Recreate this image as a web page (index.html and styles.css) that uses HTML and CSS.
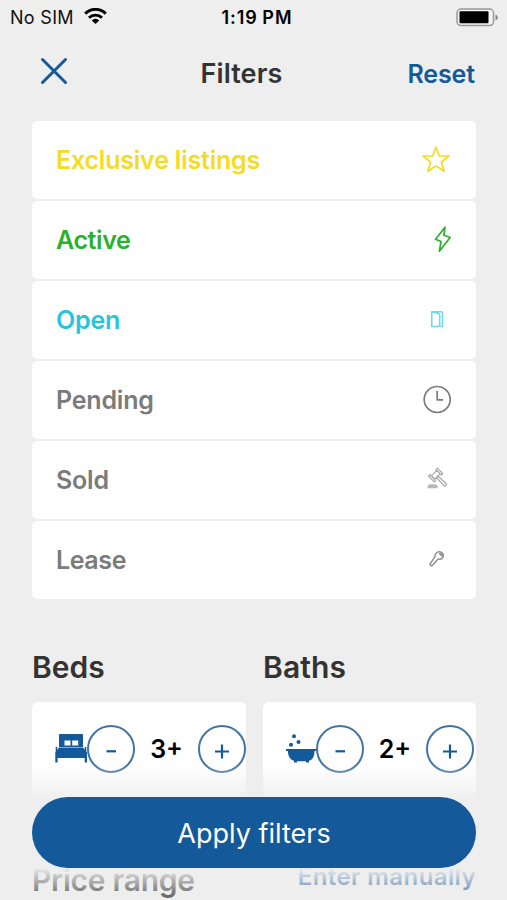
FILE: index.html
```html
<!DOCTYPE html>
<html lang="en">
<head>
<meta charset="utf-8">
<title>Filters</title>
<link rel="stylesheet" href="styles.css">
</head>
<body>
<div class="screen">
  <div class="status">
    <div class="carrier"><span>No SIM</span>
      <svg width="23" height="17" viewBox="0 0 23 17"><g fill="none" stroke="#000" stroke-width="2.9"><path d="M1.200 5.600a14.600 14.600 0 0 1 20.600 0"/><path d="M5 9.800a9.300 9.300 0 0 1 13 0"/></g><path d="M11.500 16l-3.700-3.600a5.200 5.200 0 0 1 7.400 0z"/></svg>
    </div>
    <span class="time">1:19 PM</span>
    <svg class="battery" width="43" height="19" viewBox="0 0 43 19"><rect x="1" y="1" width="36.500" height="16.600" rx="4" fill="#f4f4f4" stroke="#999" stroke-width="1.500"/><rect x="3.500" y="3.300" width="29" height="12" rx="1" fill="#000"/><path d="M39.500 6.500q2.500 1 2.500 3t-2.500 3z" fill="#888"/></svg>
  </div>
  <header class="header">
    <svg class="close" width="28" height="28" viewBox="0 0 28 28"><path d="M2.500 2.500l23 23M25.500 2.500l-23 23" stroke="#14599a" stroke-width="3" stroke-linecap="round"/></svg>
    <h1>Filters</h1>
    <span class="reset">Reset</span>
  </header>
  <main>
    <ul class="list">
      <li class="yellow"><span class="t-exclusive">Exclusive listings</span>
        <svg width="30" height="30" viewBox="0 0 30 30"><path d="M14 2l3.400 9h9.600l-7.600 6 2.700 9.300-8.100-5.400-8.100 5.400 2.700-9.300-7.600-6h9.600z"/></svg></li>
      <li class="green"><span class="t-active">Active</span>
        <svg width="30" height="30" viewBox="0 0 30 30"><path d="M23 2.200l-9.500 12 5.500 2.300-1.600 9.700 10.700-13.700-6.300-2.200z"/></svg></li>
      <li class="cyan"><span class="t-open">Open</span>
        <svg width="30" height="30" viewBox="0 0 30 30" class="thin"><path d="M15 21.500H9.700V6.700h9.500q1.300 0 1.300 1.300v14.300M10 6.900l6 1.300q1.700.4 1.700 2v10.300l-3 1.500M18.500 21.500h2"/></svg></li>
      <li class="grey"><span class="t-pending">Pending</span>
        <svg width="30" height="30" viewBox="0 0 30 30"><circle cx="15.200" cy="14.500" r="13"/><path d="M15.200 5.800v9h5.800"/></svg></li>
      <li class="grey"><span class="t-sold">Sold</span>
        <svg width="30" height="30" viewBox="0 0 30 30" class="faint"><path d="M9.500 10.700l5.300-5.300 3.300 3.300-5.300 5.300zM8 9.700l5.700 5.800-1.500 1.400L6.600 11zM14 4.700l5.300 5.300 1.400-1.500-5.300-5.300zM16.200 11.300l8.600 8-1.900 2-8.300-8.300z"/><path class="base" d="M5.500 23.200v-1.600l1.500-2.300h7l1.700 2.300v1.600z"/></svg></li>
      <li class="grey"><span class="t-lease">Lease</span>
        <svg width="30" height="30" viewBox="0 0 30 30" class="key"><path d="M13.200 11.100c-.3-3.500 3.200-5.100 6-3.900 2.900 1.300 2.800 5.300.3 6.500-1.500.7-2.500.5-3.700.5l-5 5.900c-1 1.200-3 .5-2.600-1.200z"/><path d="M17.500 8.700l2.800 2.500.3-2z"/></svg></li>
    </ul>
    <div class="counts">
      <section>
        <h2 class="t-beds">Beds</h2>
        <div class="card">
          <svg class="bed" width="32" height="30" viewBox="0 0 32 30" fill="#14599a"><path fill-rule="evenodd" d="M5.500 0H27q1 0 1 1v12H4V1Q4 0 5 0zM9.500 6.500v5h6v-5zM17.200 6.500v5h6v-5z"/><path d="M4 13.500h24l4 5v10h-2.300V24H2.600v4.500H.3V18.500z"/><path d="M.7 13h1.600v6H.7zM29.700 13h1.600v6h-1.600z"/></svg>
          <span class="circle"><svg width="44" height="44" viewBox="0 0 44 44"><path d="M17.500 24.300H27"/></svg></span>
          <b class="value">3+</b>
          <span class="circle"><svg width="44" height="44" viewBox="0 0 44 44"><path d="M15 24.500h14M22 17.500v14"/></svg></span>
        </div>
      </section>
      <section>
        <h2 class="t-baths">Baths</h2>
        <div class="card bath-card">
          <svg class="bath" width="30" height="30" viewBox="0 0 30 30" fill="#14599a"><circle cx="8" cy="2.300" r="2"/><circle cx="12.500" cy="8" r="2"/><circle cx="5" cy="10.700" r="2"/><path d="M0 15h30v2h-1.500c0 5-1.500 8.500-5.500 9.800V28.500h-3V27.200H11v1.300H8v-1.700C4 25.500 2.200 22 1.800 17H0z"/></svg>
          <span class="circle"><svg width="44" height="44" viewBox="0 0 44 44"><path d="M17.500 24.300H27"/></svg></span>
          <b class="value">2+</b>
          <span class="circle"><svg width="44" height="44" viewBox="0 0 44 44"><path d="M15 24.500h14M22 17.500v14"/></svg></span>
        </div>
      </section>
    </div>
    <div class="price"><h2 class="t-price">Price range</h2><span class="t-manual">Enter manually</span></div>
  </main>
  <div class="footer"><button class="apply"><span>Apply filters</span></button></div>
</div>
</body>
</html>
```
FILE: styles.css
```css
* { box-sizing: border-box; }
body { margin: 0; background: #eee; font-family: Inter, "Liberation Sans", sans-serif; }
svg { display: block; flex: none; }
h1, h2, ul { margin: 0; padding: 0; }
.screen { position: relative; width: 507px; height: 900px; overflow: hidden; }
.status { display: grid; grid-template-columns: 1fr auto 1fr; align-items: center; height: 34px; padding: 0 8px 0 10px; font-size: 18px; color: #111; }
.carrier { display: flex; align-items: center; gap: 10px; letter-spacing: .3px; }
.carrier svg { margin-top: -2px; }
.time { margin-left: 5px; font-weight: 600; letter-spacing: .95px; font-size: 18px; word-spacing: -1px; color: #000; }
.battery { justify-self: end; }
.header { display: grid; grid-template-columns: 1fr auto 1fr; align-items: center; height: 87px; padding: 0 32px 8px 40px; color: #333; }
.close { margin-top: -6px; }
.header h1 { margin: 1px 32px 0 0; font-size: 27px; line-height: 32px; font-weight: 600; letter-spacing: .1px; }
.reset { justify-self: end; font-size: 25px; font-weight: 600; letter-spacing: -.1px; color: #14599a; }
main { padding: 0 31px 0 32px; }
.list { display: grid; gap: 2px; list-style: none; }
.list li { display: flex; align-items: center; justify-content: space-between; height: 78px; padding: 0 24px; border-radius: 5px; background: #fff; font-size: 25px; font-weight: 600; }
.t-exclusive { letter-spacing: -.2px; }
.t-active, .t-lease { letter-spacing: -.4px; }
.t-open, .t-pending, .t-sold { letter-spacing: -.2px; }
.list svg { fill: none; stroke: currentColor; stroke-width: 1.7; stroke-linejoin: round; }
.list .thin { stroke-width: 1.6; opacity: .65; }
.list .faint { stroke-width: 1.2; opacity: .65; }
.list .key { stroke-width: 1.6; opacity: .8; }
.list .base { fill: currentColor; stroke: none; opacity: .8; }
.yellow { color: #f5dc22; }
.green { color: #2bb02b; }
.cyan { color: #26c6da; }
.grey { color: #7b7b7b; }
.counts { display: grid; grid-template-columns: 214px 213px; gap: 17px; margin-top: 48px; }
h2 { font-size: 30px; line-height: 40px; font-weight: 600; color: #333; }
.t-baths { letter-spacing: .1px; }
.card { display: flex; align-items: center; height: 112px; margin-top: 15px; padding: 0 0 18px 23px; border-radius: 6px; background: #fff; }
.circle { flex: none; width: 48px; height: 48px; border: 2px solid #4474a4; border-radius: 50%; }
.circle path { fill: none; stroke: #14599a; stroke-width: 2.2; }
.value { flex: none; width: 63px; text-align: center; font-size: 25px; font-weight: 600; color: #000; }
.bath-card .value { width: 62px; }
.price { display: flex; justify-content: space-between; align-items: center; margin-top: 46px; }
.t-price { letter-spacing: -.3px; }
.price span { margin-top: -8px; font-size: 24px; font-weight: 600; letter-spacing: .4px; color: #14599a; }
.footer { position: absolute; left: 0; right: 0; top: 764px; height: 136px; padding: 33px 31px 0 32px; background: linear-gradient(rgba(238,238,238,0), #eee 28%, #eee 76%, rgba(238,238,238,.2)); }
.apply { display: block; width: 100%; height: 71px; padding: 2px 0 0; border: 0; border-radius: 36px; background: #14599a; color: #fff; font: 400 27px Inter, sans-serif; }
```
